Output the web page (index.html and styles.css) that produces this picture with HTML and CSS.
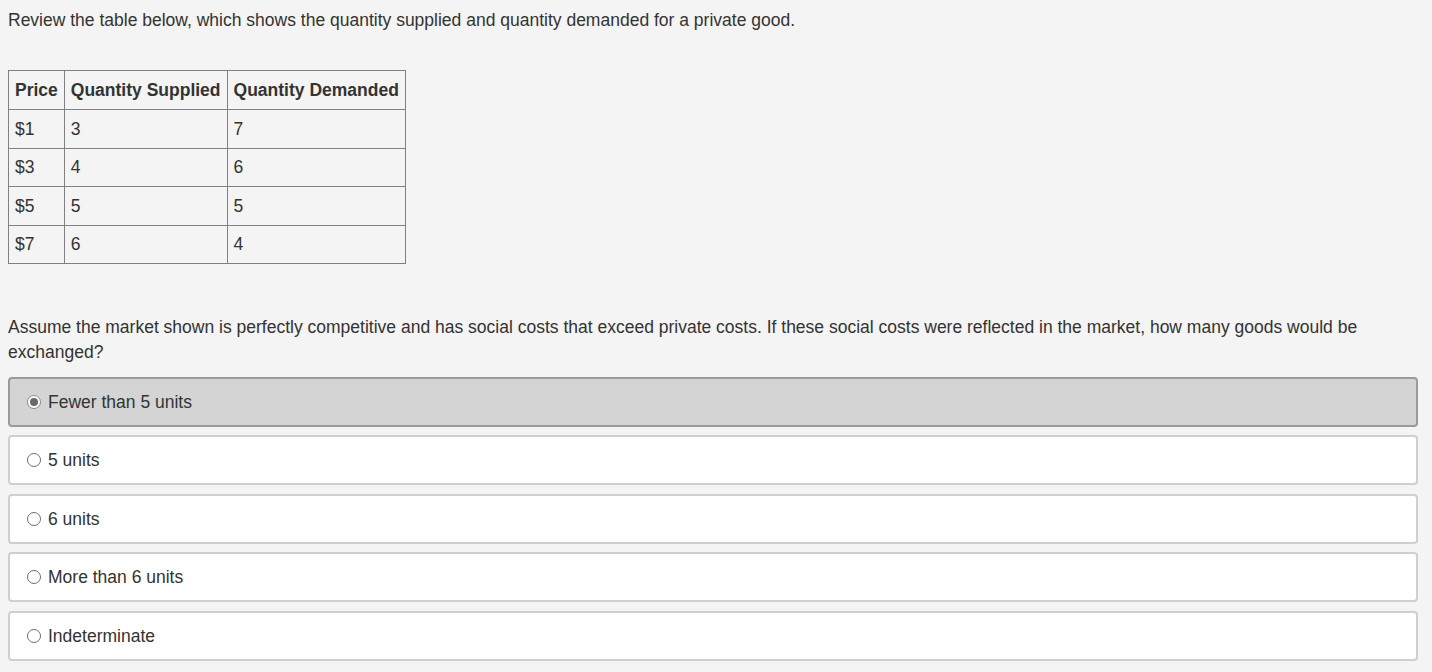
FILE: index.html
```html
<!DOCTYPE html>
<html>
<head>
<meta charset="utf-8">
<link rel="stylesheet" href="styles.css">
</head>
<body>
<div class="page">
  <p class="intro">Review the table below, which shows the quantity supplied and quantity demanded for a private good.</p>
  <table class="data">
    <thead>
      <tr><th>Price</th><th>Quantity Supplied</th><th>Quantity Demanded</th></tr>
    </thead>
    <tbody>
      <tr><td>$1</td><td>3</td><td>7</td></tr>
      <tr><td>$3</td><td>4</td><td>6</td></tr>
      <tr><td>$5</td><td>5</td><td>5</td></tr>
      <tr><td>$7</td><td>6</td><td>4</td></tr>
    </tbody>
  </table>
  <p class="question">Assume the market shown is perfectly competitive and has social costs that exceed private costs. If these social costs were reflected in the market, how many goods would be exchanged?</p>
  <div class="options">
    <div class="option selected"><span class="radio"></span><span class="label">Fewer than 5 units</span></div>
    <div class="option"><span class="radio"></span><span class="label">5 units</span></div>
    <div class="option"><span class="radio"></span><span class="label">6 units</span></div>
    <div class="option"><span class="radio"></span><span class="label">More than 6 units</span></div>
    <div class="option"><span class="radio"></span><span class="label">Indeterminate</span></div>
  </div>
</div>
</body>
</html>
```
FILE: styles.css
```css
html, body {
  margin: 0;
  padding: 0;
  background: #f4f4f4;
}
body {
  font-family: "Liberation Sans", Arial, sans-serif;
  font-size: 17.5px;
  color: #333;
}
.page {
  padding: 8px 14px 0 8px;
}
.intro {
  margin: 0;
  line-height: 24px;
}
.data {
  margin-top: 38px;
  border-collapse: collapse;
  line-height: 20px;
}
.data th, .data td {
  border: 1px solid #808080;
  padding: 8.75px 6px;
  text-align: left;
}
.data th {
  font-weight: bold;
  padding-top: 9px;
  padding-bottom: 9px;
}
.question {
  margin: 50.5px 0 12px 0;
  line-height: 25px;
}
.options {
  display: flex;
  flex-direction: column;
  gap: 8.5px;
}
.option {
  box-sizing: border-box;
  height: 50px;
  background: #fff;
  border: 2px solid #cfcfcf;
  border-radius: 4px;
  display: flex;
  align-items: center;
  padding-left: 17px;
}
.option.selected {
  background: #d4d4d4;
  border-color: #9a9a9a;
}
.radio {
  box-sizing: border-box;
  width: 14px;
  height: 14px;
  border: 1px solid #6e6e6e;
  border-radius: 50%;
  background: #fff;
  margin-right: 7px;
  position: relative;
  flex: none;
}
.selected .radio {
  border-color: #8a8a8a;
}
.selected .radio::after {
  content: "";
  position: absolute;
  left: 2px;
  top: 2px;
  width: 8px;
  height: 8px;
  border-radius: 50%;
  background: #6a6a6a;
}
.label {
  line-height: 20px;
}
```
